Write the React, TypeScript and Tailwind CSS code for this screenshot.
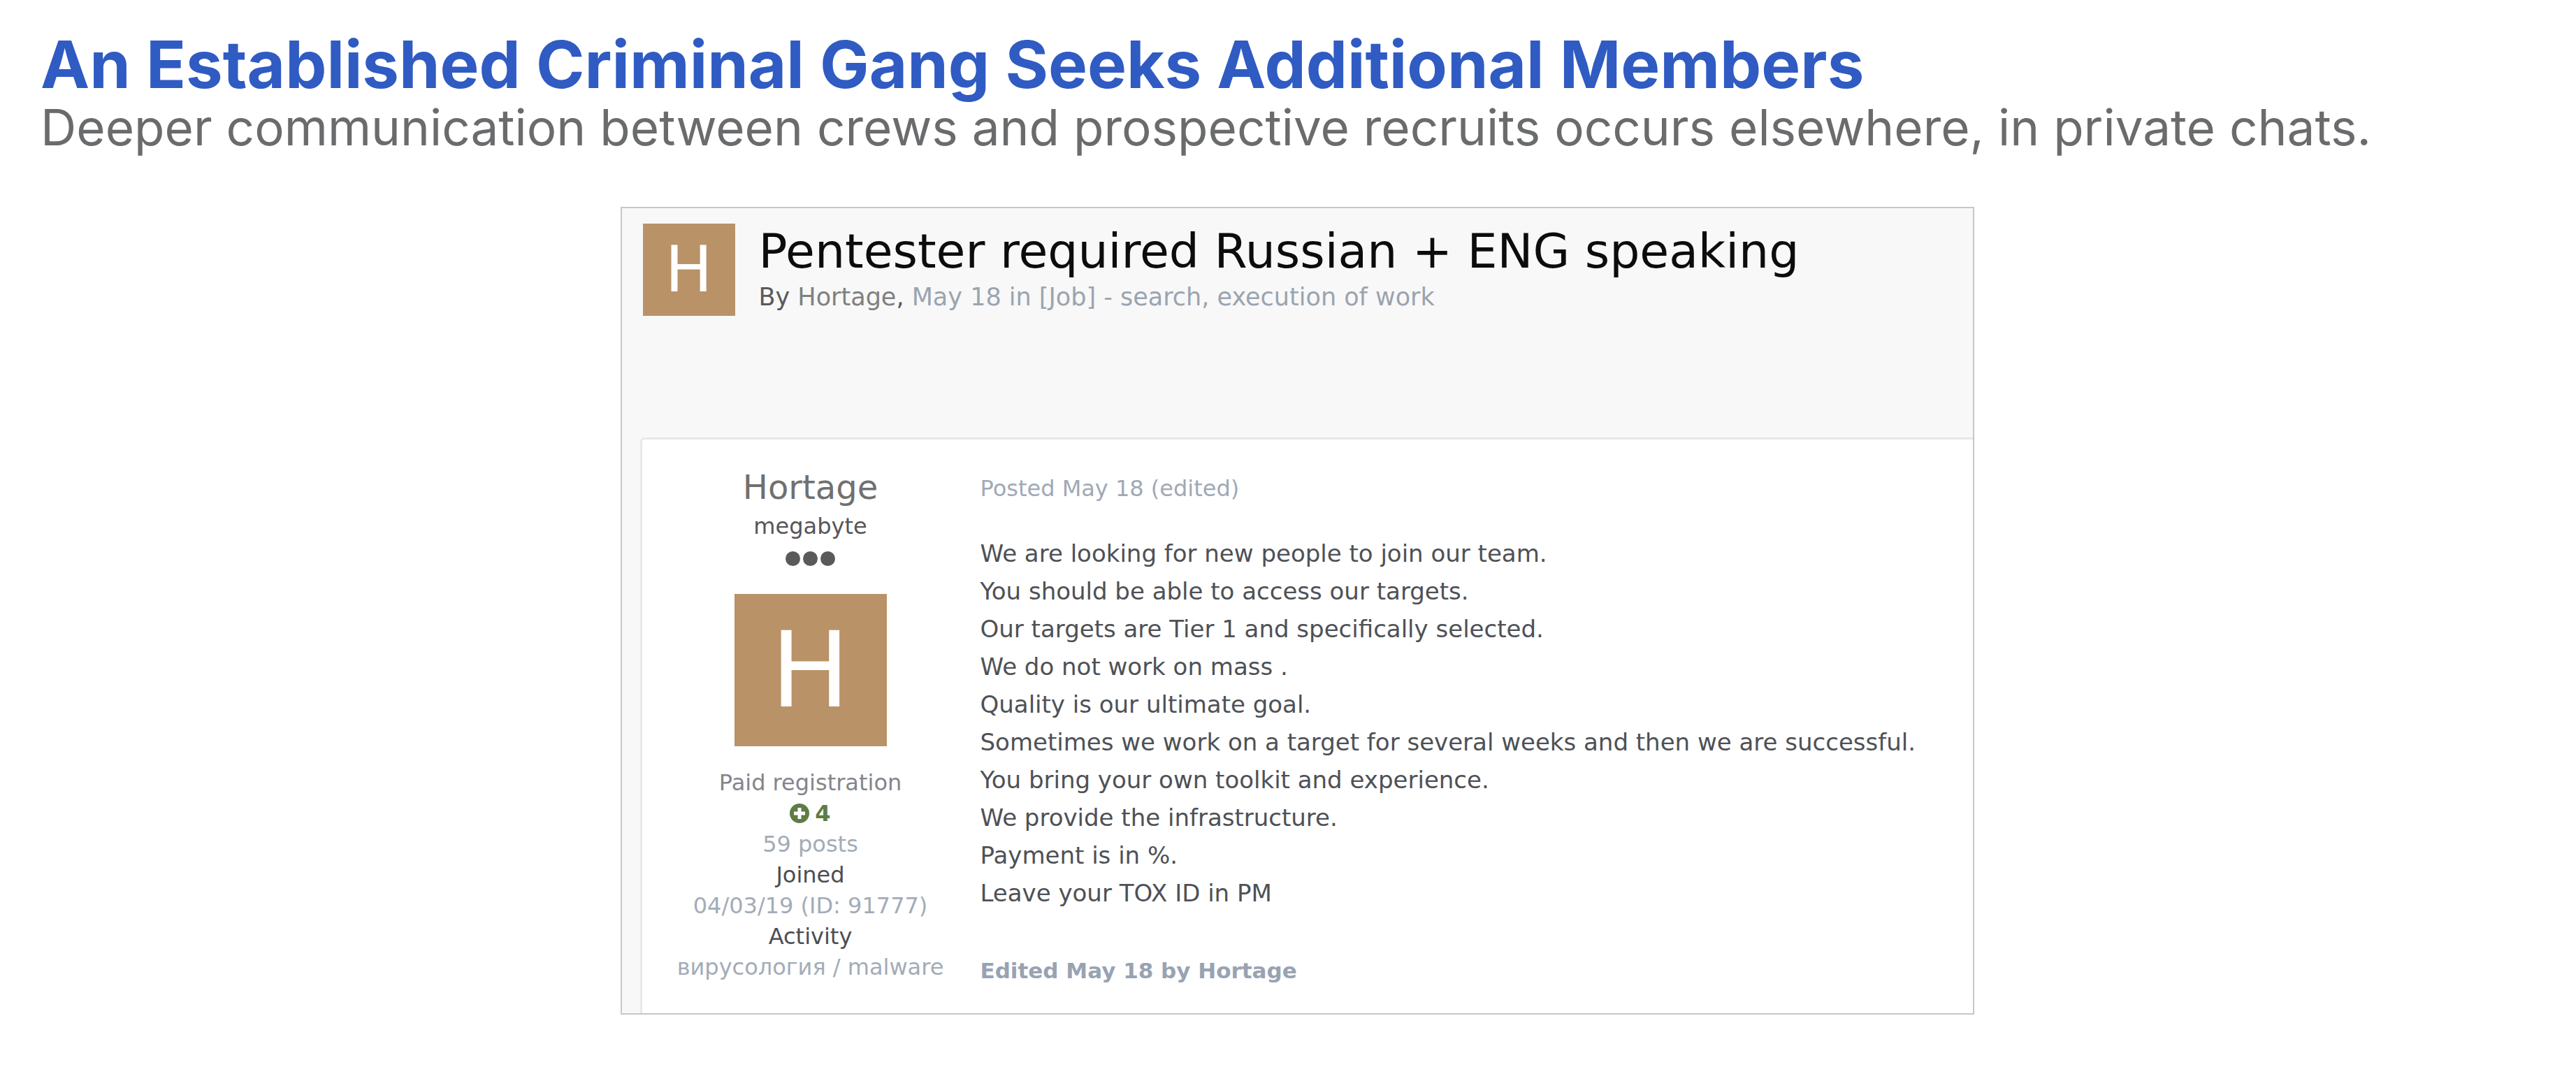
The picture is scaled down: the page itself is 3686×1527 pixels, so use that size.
const lines = [
  'We are looking for new people to join our team.',
  'You should be able to access our targets.',
  'Our targets are Tier 1 and specifically selected.',
  'We do not work on mass .',
  'Quality is our ultimate goal.',
  'Sometimes we work on a target for several weeks and then we are successful.',
  'You bring your own toolkit and experience.',
  'We provide the infrastructure.',
  'Payment is in %.',
  'Leave your TOX ID in PM',
];

export default function App() {
  return (
    <main className="min-h-screen bg-white pt-[40px] pb-[74px]">
      <header className="px-[58px]">
        <h1 className="font-['Inter',sans-serif] text-[94px] leading-[104px] font-bold whitespace-nowrap text-[#2f5bc3]">
          An Established Criminal Gang Seeks Additional Members
        </h1>
        <p className="font-['Inter',sans-serif] text-[71px] leading-[76px] whitespace-nowrap text-[#6a6b6d]">
          Deeper communication between crews and prospective recruits occurs elsewhere, in private chats.
        </p>
      </header>

      <div className="mt-[76px] flex justify-center pl-[26px]">
        <article className="w-full max-w-[1937px] border-2 border-[#c6c7cd] bg-[#f8f8f8] pl-[26px] font-['DejaVu_Sans',sans-serif]">
          <header className="flex items-start gap-[34px] pt-[22px] pb-[174px] pl-1">
            <div className="flex size-[132px] shrink-0 items-center justify-center bg-[#b99268] text-[90px] leading-[132px] text-white">H</div>
            <div>
              <h2 className="text-[68px] leading-[80px] whitespace-nowrap text-[#0c0c0c]">Pentester required Russian + ENG speaking</h2>
              <p className="text-[35px] leading-[50px] text-[#9aa4b0]">
                <span className="text-[#5a5a5e]">By </span>
                <a href="#hortage" className="text-[#808080]">Hortage</a>
                <span className="text-[#5a5a5e]">, </span>
                May 18 in [Job] - search, execution of work
              </p>
            </div>
          </header>

          <div className="flex rounded-tl-[6px] border-t-3 border-l-3 border-[#e8e8e8] bg-white">
            <aside className="mr-[2px] flex w-[482px] shrink-0 flex-col items-center pt-[38px] pb-[44px] text-[32px] leading-[44px] whitespace-nowrap text-[#a3acb8]">
              <h3 className="text-[48px] leading-[60px] text-[#707070]">
                <a href="#hortage">Hortage</a>
              </h3>
              <p className="mt-1 text-[#55565b]">megabyte</p>
              <div className="mt-[14px] flex gap-1">
                <span className="size-[21px] rounded-full bg-[#5a5a5a]" />
                <span className="size-[21px] rounded-full bg-[#5a5a5a]" />
                <span className="size-[21px] rounded-full bg-[#5a5a5a]" />
              </div>
              <div className="mt-[40px] flex size-[218px] items-center justify-center bg-[#b99268] text-[150px] leading-[218px] text-white">H</div>
              <p className="mt-[30px] text-[#83868c]">Paid registration</p>
              <p className="flex items-center gap-2 font-bold text-[#5f7c44]">
                <svg viewBox="0 0 28 28" className="size-[28px]" aria-hidden="true">
                  <circle cx="14" cy="14" r="14" fill="currentColor" />
                  <path d="M14 6V22M6 14H22" stroke="#fff" strokeWidth="5" />
                </svg>
                4
              </p>
              <p>59 posts</p>
              <p className="text-[#4c4e54]">Joined</p>
              <p>04/03/19 (ID: 91777)</p>
              <p className="text-[#4c4e54]">Activity</p>
              <p>вирусология / malware</p>
            </aside>

            <section className="pt-[43px] text-[34px] leading-[54px] whitespace-nowrap text-[#4e5156]">
              <p className="text-[32px] text-[#9fa9b6]">Posted May 18 (edited)</p>
              <div className="mt-[39px]">
                {lines.map((line) => (
                  <p key={line}>{line}</p>
                ))}
              </div>
              <p className="mt-[57px] text-[31px] font-bold text-[#98a3b2]">Edited May 18 by Hortage</p>
            </section>
          </div>
        </article>
      </div>
    </main>
  );
}
